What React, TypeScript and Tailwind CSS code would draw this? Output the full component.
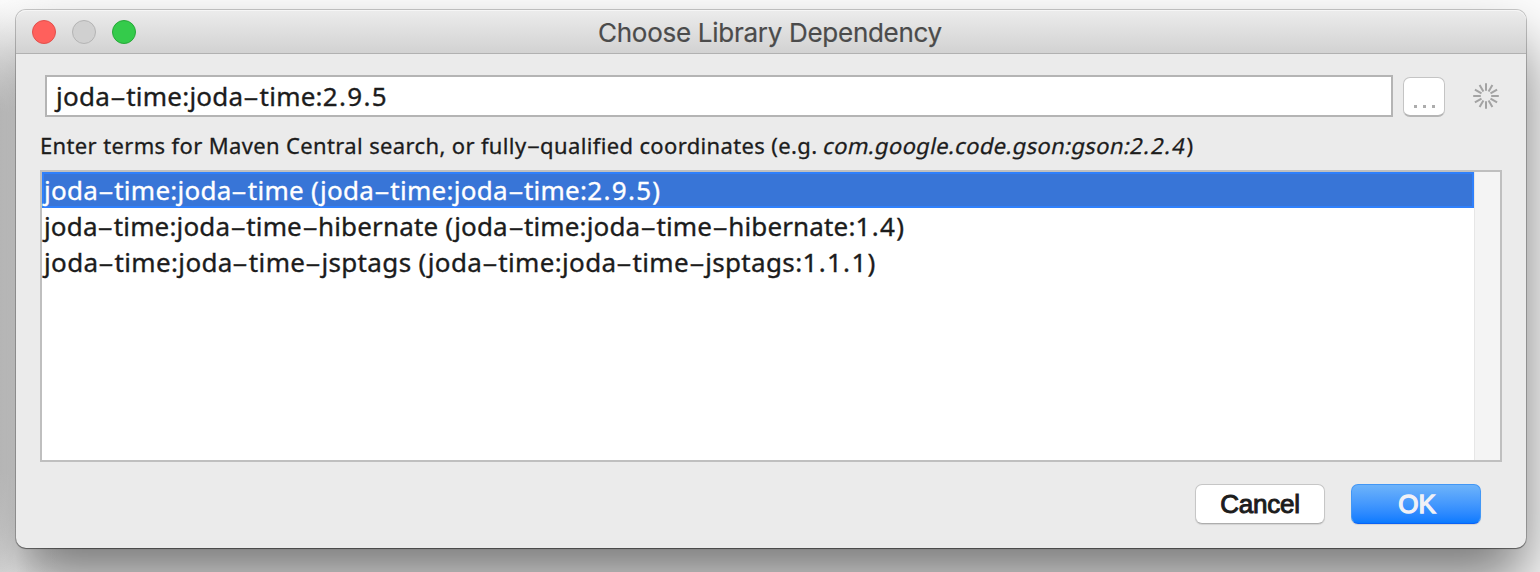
import { Fragment } from "react";

const results = [
  { label: "joda-time:joda-time (joda-time:joda-time:2.9.5)", fit: "tracking-[0.27px]" },
  { label: "joda-time:joda-time-hibernate (joda-time:joda-time-hibernate:1.4)", fit: "tracking-[0.15px]" },
  { label: "joda-time:joda-time-jsptags (joda-time:joda-time-jsptags:1.1.1)", fit: "tracking-[0.35px]" },
];

/* Text with wide dashes and wide version numbers, as in Lucida Grande. */
function Wide({ text }: { text: string }) {
  return (
    <>
      {text.split(/(-|\d[\d.]*)/).map((part, i) => {
        if (part === "-") {
          return (
            <span key={i} className="inline-block w-[0.62em] text-center">
              <span className="inline-block scale-x-[1.9] scale-y-90">-</span>
            </span>
          );
        }
        if (/^\d/.test(part)) {
          return <span key={i} className="tracking-[1.3px]">{part}</span>;
        }
        return <Fragment key={i}>{part}</Fragment>;
      })}
    </>
  );
}

function Spinner() {
  return (
    <svg width="26" height="26" viewBox="-13 -13 26 26" stroke="#a3a3a3" strokeWidth="2">
      {Array.from({ length: 12 }, (_, i) => (
        <line key={i} x1="0" y1="-5.2" x2="0" y2="-12.8" transform={`rotate(${i * 30})`} />
      ))}
    </svg>
  );
}

export default function App() {
  return (
    <div className="h-[572px] w-[1540px] overflow-hidden bg-[#fdfdfd] bg-[linear-gradient(to_bottom,#fdfdfd_0,transparent_110px,transparent_470px,rgba(253,253,253,0.4)_572px),linear-gradient(to_right,#d6d6d6,#f4f4f4_16px,#fdfdfd_60px)] px-4 pt-[10px] pr-[14px] font-['Noto_Sans',sans-serif] text-[#1c1c1c]">
      <div className="flex h-[538px] flex-col rounded-[10px] bg-[#ebebeb] shadow-[0_0_0_1px_rgba(0,0,0,0.2),0_1px_1px_rgba(0,0,0,0.35),0_34px_60px_rgba(0,0,0,0.52)]">
        <header className="grid h-[44px] shrink-0 grid-cols-[1fr_auto_1fr] items-center rounded-t-[10px] border-b border-[#b1b1b1] bg-linear-to-b from-[#ececec] to-[#d2d2d2] px-4 shadow-[inset_0_1px_0_#f6f6f6]">
          <div className="flex gap-4">
            <span className="size-6 rounded-full border border-[#e2504c] bg-[#ff605c]" />
            <span className="size-6 rounded-full border border-[#b4b4b4] bg-[#d0d0d0]" />
            <span className="size-6 rounded-full border border-[#27a839] bg-[#34cb4b]" />
          </div>
          <h1 className="-ml-[2px] pt-[2px] font-[Inter,sans-serif] text-[26px] leading-none tracking-[-0.28px] text-[#4b4b4b] [-webkit-text-stroke:0.2px_#4b4b4b]">Choose Library Dependency</h1>
        </header>

        <main className="flex flex-1 flex-col pr-6 pl-6">
          <div className="mt-[21px] flex items-center pl-[5px]">
            <div className="flex h-[42px] w-[1348px] items-center border-2 border-[#b4b4b4] bg-white pl-[9px] text-[26px] whitespace-nowrap [-webkit-text-stroke:0.35px_#1c1c1c]">
              <span className="tracking-[0.25px]"><Wide text="joda-time:joda-time:2.9.5" /></span>
            </div>
            <button className="mt-[2px] ml-[10px] flex h-[40px] w-[42px] items-end justify-center gap-[6px] rounded-[7px] border border-b-2 border-[#c4c4c4] border-b-[#b5b5b5] bg-white pb-[7px]" aria-label="Browse">
              <span className="size-[3px] bg-[#adadad]" />
              <span className="size-[3px] bg-[#adadad]" />
              <span className="size-[3px] bg-[#adadad]" />
            </button>
            <div className="ml-[28px]"><Spinner /></div>
          </div>

          <p className="mt-[11px] h-[35px] text-[22px] leading-[34px] whitespace-nowrap [-webkit-text-stroke:0.3px_#1c1c1c]">
            <span className="tracking-[0.36px]"><Wide text="Enter terms for Maven Central search, or fully-qualified coordinates (e.g. " /></span>
            <em className="inline-block -skew-x-12 tracking-[0.36px] not-italic"><Wide text="com.google.code.gson:gson:2.2.4" /></em>)
          </p>

          <div className="mt-[7px] flex h-[292px] w-[1462px] border-2 border-[#bfbfbf] bg-white">
            <ul className="flex-1 text-[26px] leading-[36px] whitespace-nowrap">
              {results.map((r, i) => (
                <li key={r.label} className={i === 0 ? "h-9 bg-[#3875d7] pl-[2px] text-white inset-ring-2 inset-ring-[#2f80fb] [-webkit-text-stroke:0.35px_#fff]" : "h-9 pl-[2px] [-webkit-text-stroke:0.35px_#1c1c1c]"}>
                  <span className={r.fit}><Wide text={r.label} /></span>
                </li>
              ))}
            </ul>
            <div className="w-[26px] border-l border-[#e6e6e6] bg-[#f4f4f4]" />
          </div>

          <footer className="mt-[22px] flex justify-end gap-[26px] pr-[21px] font-['Liberation_Sans',sans-serif] text-[26px]">
            <button className="h-10 w-[130px] rounded-[7px] border border-[#c6c6c6] border-b-[#adadad] bg-white pt-px leading-[37px] tracking-[-0.2px] shadow-[0_1px_1px_rgba(0,0,0,0.1)] [-webkit-text-stroke:1px_#1c1c1c]">Cancel</button>
            <button className="h-10 w-[130px] rounded-[7px] border border-[#4297f5] border-b-[#0a62f5] bg-linear-to-b from-[#6db3fa] to-[#077aff] pt-px pl-[2px] leading-[37px] text-[#f1f1f6] shadow-[0_1px_1px_rgba(0,0,0,0.1)] [-webkit-text-stroke:1.3px_#f1f1f6]">OK</button>
          </footer>
        </main>
      </div>
    </div>
  );
}
